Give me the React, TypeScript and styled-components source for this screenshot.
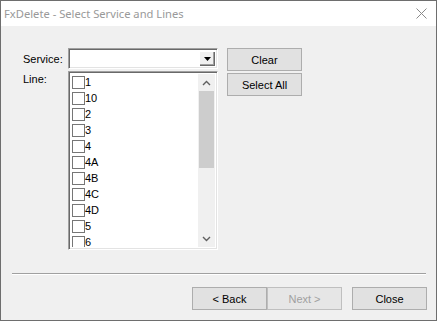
import React from "react";
import styled, {createGlobalStyle} from "styled-components";

const GlobalStyle = createGlobalStyle`
  html, body {
    margin: 0;
    padding: 0;
    background: #f0f0f0;
  }
  body {
    font-family: "Liberation Sans", Arial, sans-serif;
    font-size: 11px;
    color: #000;
  }
`;

const Window = styled.div`
  width: 437px;
  height: 321px;
  box-sizing: border-box;
  border: 1px solid #6e6e6e;
  display: flex;
  flex-direction: column;
  background: #f0f0f0;
`;

const TitleBar = styled.div`
  height: 25px;
  background: #fff;
  display: flex;
  align-items: center;
  justify-content: space-between;
  padding: 0 9px 0 3px;
`;

const Title = styled.span`
  font-family: "Noto Sans", "Open Sans", sans-serif;
  font-size: 11.2px;
  color: #999;
`;

const Body = styled.div`
  flex: 1;
  display: flex;
  flex-direction: column;
  padding: 22px 9px 9px 0;
`;

const Content = styled.div`
  display: flex;
  align-items: flex-start;
  gap: 9px;
  padding-left: 22px;
`;

const Form = styled.div`
  display: grid;
  grid-template-columns: 45px 150px;
  grid-template-rows: 21px 179px;
  row-gap: 2px;
`;

const Label = styled.span<{$center?: boolean}>`
  display: flex;
  align-items: ${(p) => (p.$center ? "center" : "flex-start")};
  padding-top: ${(p) => (p.$center ? "0" : "2px")};
`;

const Sunken = styled.div`
  box-sizing: border-box;
  background: #fff;
  border-top: 1px solid #a0a0a0;
  border-left: 1px solid #a0a0a0;
  border-right: 1px solid #fff;
  border-bottom: 1px solid #fff;
  box-shadow: inset 1px 1px 0 #696969, inset -1px -1px 0 #e3e3e3;
`;

const Combo = styled(Sunken)`
  display: flex;
  justify-content: flex-end;
  padding: 2px;
`;

const DropButton = styled.div`
  width: 16px;
  background: #f0f0f0;
  box-shadow: inset 1px 1px 0 #fff, inset -1px -1px 0 #696969, inset -2px -2px 0 #a0a0a0;
  display: flex;
  align-items: center;
  justify-content: center;
`;

const ListBox = styled(Sunken)`
  display: flex;
  padding: 2px;
`;

const Viewport = styled.div`
  flex: 1;
  overflow: hidden;
`;

const Row = styled.label`
  display: flex;
  align-items: center;
  height: 16px;
  padding-left: 1px;
`;

const Check = styled.span`
  width: 13px;
  height: 13px;
  box-sizing: border-box;
  border: 1px solid #767676;
  background: #fff;
`;

const ScrollBar = styled.div`
  width: 17px;
  background: #f0f0f0;
  display: flex;
  flex-direction: column;
`;

const ScrollArrow = styled.div`
  height: 17px;
  display: flex;
  align-items: center;
  justify-content: center;
`;

const Track = styled.div`
  flex: 1;
  padding: 0 1px;
`;

const Thumb = styled.div`
  height: 77px;
  background: #cdcdcd;
`;

const ButtonColumn = styled.div`
  display: flex;
  flex-direction: column;
  gap: 2px;
`;

const Button = styled.button<{$disabled?: boolean}>`
  width: 75px;
  height: 23px;
  box-sizing: border-box;
  margin: 0;
  padding: 0;
  border: 1px solid ${(p) => (p.$disabled ? "#bfbfbf" : "#adadad")};
  background: ${(p) => (p.$disabled ? "#e6e6e6" : "#e1e1e1")};
  font-family: "Liberation Sans", Arial, sans-serif;
  font-size: 11px;
  color: ${(p) => (p.$disabled ? "#a0a0a0" : "#000")};
`;

const Separator = styled.div`
  margin: 23px 1px 0 11px;
  border-top: 1px solid #a0a0a0;
  border-bottom: 1px solid #fff;
`;

const Footer = styled.div`
  display: flex;
  justify-content: flex-end;
  margin-top: 12px;
`;

const Spacer = styled.div`
  width: 10px;
`;

const lines = ["1", "10", "2", "3", "4", "4A", "4B", "4C", "4D", "5", "6"];

const CloseIcon = () => (
    <svg width="11" height="11" viewBox="0 0 11 11">
        <path d="M0.5 0.5 L10.5 10.5 M10.5 0.5 L0.5 10.5" stroke="#8a8a8a" strokeWidth="1" fill="none"/>
    </svg>
);

const Chevron = ({up}: {up?: boolean}) => (
    <svg width="9" height="6" viewBox="0 0 9 6">
        <path d={up ? "M1 5 L4.5 1.5 L8 5" : "M1 1 L4.5 4.5 L8 1"} stroke="#606060" strokeWidth="1.4" fill="none"/>
    </svg>
);

const App = () => {
    return (
        <>
            <GlobalStyle/>
            <Window>
                <TitleBar>
                    <Title>FxDelete - Select Service and Lines</Title>
                    <CloseIcon/>
                </TitleBar>
                <Body>
                    <Content>
                        <Form>
                            <Label $center>Service:</Label>
                            <Combo>
                                <DropButton>
                                    <svg width="7" height="4" viewBox="0 0 7 4">
                                        <path d="M0 0 H7 L3.5 4 Z" fill="#000"/>
                                    </svg>
                                </DropButton>
                            </Combo>
                            <Label>Line:</Label>
                            <ListBox>
                                <Viewport>
                                    {lines.map((line) => (
                                        <Row key={line}>
                                            <Check/>
                                            {line}
                                        </Row>
                                    ))}
                                </Viewport>
                                <ScrollBar>
                                    <ScrollArrow><Chevron up/></ScrollArrow>
                                    <Track><Thumb/></Track>
                                    <ScrollArrow><Chevron/></ScrollArrow>
                                </ScrollBar>
                            </ListBox>
                        </Form>
                        <ButtonColumn>
                            <Button>Clear</Button>
                            <Button>Select All</Button>
                        </ButtonColumn>
                    </Content>
                    <Separator/>
                    <Footer>
                        <Button>&lt; Back</Button>
                        <Button $disabled>Next &gt;</Button>
                        <Spacer/>
                        <Button>Close</Button>
                    </Footer>
                </Body>
            </Window>
        </>
    );
};

export default App;
